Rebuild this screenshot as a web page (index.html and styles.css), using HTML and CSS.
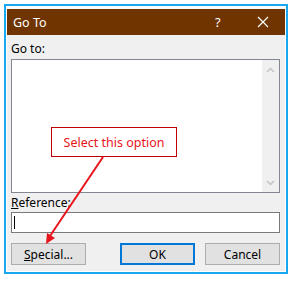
FILE: index.html
```html
<!DOCTYPE html>
<html lang="en">
<head>
    <meta charset="UTF-8">
    <title>Go To</title>
    <link rel="stylesheet" href="styles.css">
</head>
<body>
    <div class="window">
        <div class="titlebar">
            <span class="title">Go To</span>
            <span class="help">?</span>
            <span class="close">
                <svg width="12" height="12" viewBox="0 0 12 12">
                    <path d="M1 1 L11 11 M11 1 L1 11" stroke="#fff" stroke-width="1.2" fill="none"/>
                </svg>
            </span>
        </div>

        <div class="content">
            <div class="label">Go to:</div>
            <div class="listbox">
                <div class="list-area"></div>
                <div class="scrollbar">
                    <svg width="9" height="6" viewBox="0 0 9 6"><path d="M1 5 L4.5 1.5 L8 5" stroke="#c3c3c3" stroke-width="1.5" fill="none"/></svg>
                    <svg width="9" height="6" viewBox="0 0 9 6"><path d="M1 1 L4.5 4.5 L8 1" stroke="#c3c3c3" stroke-width="1.5" fill="none"/></svg>
                </div>
            </div>

            <div class="label ref-label"><u>R</u>eference:</div>
            <div class="textbox"><span class="caret"></span></div>

            <div class="buttons">
                <button class="btn"><u>S</u>pecial...</button>
                <div class="btn-group">
                    <button class="btn btn-default">OK</button>
                    <button class="btn">Cancel</button>
                </div>
            </div>
        </div>

        <!-- annotation over the dialog -->
        <div class="callout">Select this option</div>
        <svg class="arrow" width="284" height="270" viewBox="0 0 284 270">
            <line x1="99" y1="153" x2="46" y2="232" stroke="#e8141b" stroke-width="2"/>
            <path d="M42 240 L43 229 L51 234 Z" fill="#e8141b"/>
        </svg>
    </div>
</body>
</html>
```

FILE: styles.css
```css
* {
    margin: 0;
    padding: 0;
    box-sizing: border-box;
}

body {
    background-color: #ffffff;
    font-family: "Noto Sans", "Open Sans", sans-serif;
    font-size: 12px;
    color: #000;
}

.window {
    position: relative;
    margin: 4px 0 0 4px;
    width: 284px;
    height: 270px;
    border: 2px solid #17a8ef;
    padding: 3px 1px 1px 1px;
    background-color: #ffffff;
    display: flex;
    flex-direction: column;
}

.titlebar {
    height: 26px;
    background-color: #6f3400;
    color: white;
    display: flex;
    align-items: center;
    padding-left: 6px;
    font-size: 12.5px;
}

.title {
    flex: 1;
}

.help {
    width: 16px;
    margin-right: 26px;
    font-size: 13px;
}

.close {
    display: flex;
    width: 24px;
    margin-right: 4px;
}

.content {
    flex: 1;
    background-color: #f0f0f0;
    padding: 6px 5px 0 4px;
}

.label {
    line-height: 16px;
}

.listbox {
    margin-top: 2px;
    height: 134px;
    border: 1px solid #828790;
    background-color: white;
    display: flex;
}

.list-area {
    flex: 1;
}

.scrollbar {
    width: 17px;
    background-color: #f0f0f0;
    display: flex;
    flex-direction: column;
    justify-content: space-between;
    align-items: center;
    padding: 7px 0 6px 0;
}

.ref-label {
    margin-top: 2px;
}

.textbox {
    margin-top: 1px;
    height: 21px;
    border: 1px solid #7a7a7a;
    background-color: white;
    padding: 3px 0 0 2px;
}

.caret {
    display: block;
    width: 1px;
    height: 13px;
    background-color: #000;
}

.buttons {
    margin-top: 10px;
    display: flex;
    justify-content: space-between;
}

.btn-group {
    display: flex;
    gap: 10px;
}

.btn {
    width: 75px;
    height: 22px;
    background-color: #e1e1e1;
    border: 1px solid #adadad;
    font-family: inherit;
    font-size: 12px;
    color: #000;
}

.btn-default {
    border: 2px solid #0078d7;
}

.callout {
    position: absolute;
    left: 45px;
    top: 121px;
    width: 126px;
    height: 30px;
    border: 1px solid #c00000;
    background-color: white;
    color: #e8141b;
    font-size: 12.5px;
    display: flex;
    align-items: center;
    justify-content: center;
}

.arrow {
    position: absolute;
    left: -2px;
    top: -2px;
}
```
